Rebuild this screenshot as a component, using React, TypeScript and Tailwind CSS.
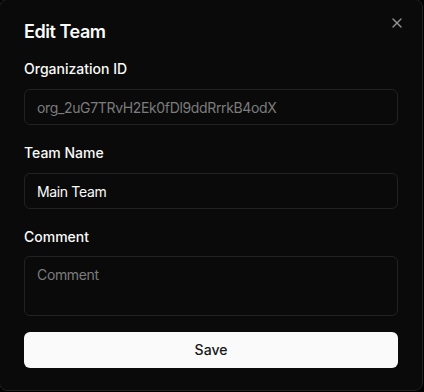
import { X } from "lucide-react";

const font = { fontFamily: "Inter, 'Noto Sans', sans-serif" };

export default function App() {
  return (
    <div className="h-[392px] w-[424px] overflow-hidden bg-black" style={font}>
      <div className="relative -ml-px -mt-px flex h-[392px] w-[424px] flex-col rounded-lg border border-[#222222] bg-[#0a0a0a] px-6 pt-[18px]">
        <button
          type="button"
          className="absolute right-[17px] top-[15px] text-[#a3a3a3] opacity-90"
        >
          <X size={16} strokeWidth={2} />
        </button>

        <h2 className="text-lg font-semibold leading-7 tracking-tight text-[#fafafa]">Edit Team</h2>

        <div className="mt-[13px] flex flex-col gap-[18px]">
          <div className="flex flex-col gap-2.5">
            <label className="text-sm font-medium leading-5 text-[#fafafa]">Organization ID</label>
            <input
              disabled
              value="org_2uG7TRvH2Ek0fDl9ddRrrkB4odX"
              readOnly
              className="h-9 w-full rounded-md border border-[#222222] bg-[#0a0a0a] px-3 text-sm tracking-tight text-[#7c7c7c] outline-none"
            />
          </div>

          <div className="flex flex-col gap-2.5">
            <label className="text-sm font-medium leading-5 text-[#fafafa]">Team Name</label>
            <input
              value="Main Team"
              readOnly
              className="h-9 w-full rounded-md border border-[#222222] bg-[#0a0a0a] px-3 text-sm tracking-tight text-[#fafafa] outline-none"
            />
          </div>

          <div className="flex flex-col gap-[9px]">
            <label className="text-sm font-medium leading-5 text-[#fafafa]">Comment</label>
            <textarea
              placeholder="Comment"
              className="h-[60px] w-full resize-none rounded-md border border-[#222222] bg-[#0a0a0a] px-3 py-2 text-sm leading-5 tracking-tight text-[#fafafa] outline-none placeholder:text-[#7c7c7c]"
            />
          </div>
        </div>

        <button
          type="button"
          className="mt-4 h-9 w-full rounded-md bg-[#fafafa] text-sm font-medium text-[#171717]"
        >
          Save
        </button>
      </div>
    </div>
  );
}
